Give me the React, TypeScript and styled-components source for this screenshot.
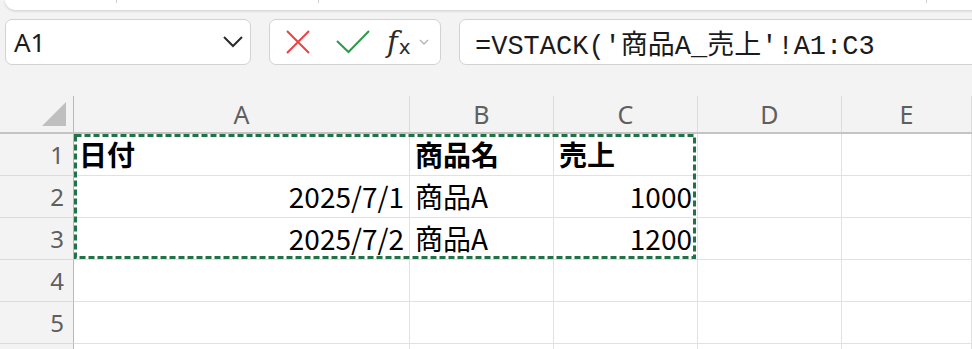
import styled, { createGlobalStyle } from "styled-components";

const GlobalStyle = createGlobalStyle`
    html, body {
        margin: 0;
        padding: 0;
        background: #f3f3f3;
        overflow: hidden;
    }
    * {
        box-sizing: border-box;
    }
`;

const CELL_FONT = `"Noto Sans CJK JP", "Noto Sans", sans-serif`;
const UI_FONT = `"Noto Sans", "Noto Sans CJK JP", sans-serif`;
const COLUMNS = "74px 336px 144px 144px 144px 1fr";

const PAGE = styled.div`
    width: 972px;
    height: 349px;
    overflow: hidden;
`;

// RIBBON (bottom edge of the ribbon panel above)
const RIBBON = styled.div`
    margin-left: 5px;
    width: 1000px;
    height: 10px;
    background: #ffffff;
    border-bottom-left-radius: 10px;
    box-shadow: 0 1px 3px rgba(0, 0, 0, 0.16);
    display: flex;
`;

const RIBBONPART = styled.div<{ $w: number }>`
    width: ${(p) => p.$w}px;
    height: 3px;
    border-right: 1px solid #d0d0d0;
`;

// FORMULA BAR
const FORMULABAR = styled.div`
    display: flex;
    gap: 18px;
    padding: 9px 0 0 5px;
    height: 55px;
`;

const BOX = styled.div<{ $w: number }>`
    width: ${(p) => p.$w}px;
    flex-shrink: 0;
    height: 46px;
    background: #ffffff;
    border: 1.5px solid #d2d2d2;
    border-radius: 7px;
    display: flex;
    align-items: center;
`;

const NAMETEXT = styled.span`
    flex: 1;
    padding-left: 8px;
    font-family: ${UI_FONT};
    font-size: 26px;
    color: #1b1b1b;
`;

const CHEVRON = styled.svg`
    margin-right: 6px;
`;

const ICONBTN = styled.svg<{ $ml: number }>`
    margin-left: ${(p) => p.$ml}px;
    flex-shrink: 0;
`;

const FX = styled.span`
    margin-left: 17px;
    font-family: "DejaVu Serif", serif;
    font-style: italic;
    font-size: 29px;
    color: #2b2b2b;
    display: flex;
    align-items: baseline;
    line-height: 1;

    & i {
        font-family: "DejaVu Sans", sans-serif;
        font-style: normal;
        font-size: 20px;
        margin-left: 1px;
        position: relative;
        top: 2px;
    }
`;

const FORMULATEXT = styled.span`
    padding-left: 15px;
    font-family: "Liberation Mono", "Noto Sans CJK JP", monospace;
    font-size: 27px;
    color: #1b1b1b;
    white-space: nowrap;
`;

// SHEET
const SHEET = styled.div`
    margin-top: 31px;
    background: #ffffff;
`;

const HEADERROW = styled.div`
    display: grid;
    grid-template-columns: ${COLUMNS};
    height: 38px;
    background: #f3f3f3;
    border-bottom: 2px solid #c4c4c4;
`;

const CORNER = styled.div`
    border-right: 1px solid #b9b9b9;
    display: flex;
    justify-content: flex-end;
    align-items: flex-end;
    padding: 0 7px 6px 0;
`;

const TRIANGLE = styled.div`
    width: 24px;
    height: 24px;
    background: #bfbfbf;
    clip-path: polygon(100% 0, 100% 100%, 0 100%);
`;

const COLHEAD = styled.div`
    border-right: 1px solid #dcdcdc;
    display: flex;
    align-items: center;
    justify-content: center;
    font-family: ${UI_FONT};
    font-size: 25px;
    color: #5f5f5f;
`;

const BODY = styled.div`
    position: relative;
`;

const ROW = styled.div`
    display: grid;
    grid-template-columns: ${COLUMNS};
    height: 42px;
`;

const ROWHEAD = styled.div`
    background: #f3f3f3;
    border-right: 1px solid #b9b9b9;
    border-bottom: 1px solid #dcdcdc;
    display: flex;
    align-items: center;
    justify-content: flex-end;
    padding-right: 9px;
    font-family: ${UI_FONT};
    font-size: 24px;
    color: #5f5f5f;
`;

const CELL = styled.div<{ $right?: boolean; $bold?: boolean }>`
    border-right: 1px solid #e1e1e1;
    border-bottom: 1px solid #e1e1e1;
    display: flex;
    align-items: center;
    justify-content: ${(p) => (p.$right ? "flex-end" : "flex-start")};
    padding: 0 5px 1px 5px;
    font-family: ${CELL_FONT};
    font-size: 28px;
    font-weight: ${(p) => (p.$bold ? 700 : 400)};
    color: #000000;
    white-space: nowrap;
    overflow: hidden;
`;

// copy marquee around A1:C3
const MARQUEE = styled.svg`
    position: absolute;
    left: 74px;
    top: 0;
    pointer-events: none;
`;

type CellData = { text: string; right?: boolean; bold?: boolean };

const rows: CellData[][] = [
    [{ text: "日付", bold: true }, { text: "商品名", bold: true }, { text: "売上", bold: true }],
    [{ text: "2025/7/1", right: true }, { text: "商品A" }, { text: "1000", right: true }],
    [{ text: "2025/7/2", right: true }, { text: "商品A" }, { text: "1200", right: true }],
    [],
    [],
];

const columns = ["A", "B", "C", "D", "E"];

const App: React.FC = () => {
    return (
        <PAGE>
            <GlobalStyle />
            <RIBBON>
                <RIBBONPART $w={112} />
                <RIBBONPART $w={202} />
                <RIBBONPART $w={608} />
            </RIBBON>

            <FORMULABAR>
                <BOX $w={246}>
                    <NAMETEXT>A1</NAMETEXT>
                    <CHEVRON width="22" height="14" viewBox="0 0 22 14">
                        <path d="M2 2 L11 11 L20 2" fill="none" stroke="#2a2a2a" strokeWidth="2" />
                    </CHEVRON>
                </BOX>
                <BOX $w={172}>
                    <ICONBTN $ml={15} width="26" height="26" viewBox="0 0 26 26">
                        <path d="M2 2 L24 24 M24 2 L2 24" stroke="#ee4040" strokeWidth="2" fill="none" />
                    </ICONBTN>
                    <ICONBTN $ml={25} width="34" height="26" viewBox="0 0 34 26">
                        <path d="M1 12 L12.5 23 L33 2" stroke="#2c9a47" strokeWidth="2" fill="none" />
                    </ICONBTN>
                    <FX>
                        f<i>x</i>
                    </FX>
                    <ICONBTN $ml={8} width="10" height="7" viewBox="0 0 10 7">
                        <path d="M1 1 L5 5 L9 1" stroke="#b4b4b4" strokeWidth="1.3" fill="none" />
                    </ICONBTN>
                </BOX>
                <BOX $w={540}>
                    <FORMULATEXT>=VSTACK('商品A_売上'!A1:C3</FORMULATEXT>
                </BOX>
            </FORMULABAR>

            <SHEET>
                <HEADERROW>
                    <CORNER>
                        <TRIANGLE />
                    </CORNER>
                    {columns.map((c) => (
                        <COLHEAD key={c}>{c}</COLHEAD>
                    ))}
                </HEADERROW>
                <BODY>
                    {rows.map((r, i) => (
                        <ROW key={i}>
                            <ROWHEAD>{i + 1}</ROWHEAD>
                            {columns.map((c, j) => (
                                <CELL key={c} $right={r[j]?.right} $bold={r[j]?.bold}>
                                    {r[j]?.text}
                                </CELL>
                            ))}
                        </ROW>
                    ))}
                    <ROW>
                        <ROWHEAD />
                        {columns.map((c) => (
                            <CELL key={c} />
                        ))}
                    </ROW>
                    <MARQUEE width="622" height="125" viewBox="0 0 622 125">
                        <rect
                            x="1.5"
                            y="1.5"
                            width="619"
                            height="122"
                            fill="none"
                            stroke="#ffffff"
                            strokeWidth="3"
                        />
                        <rect
                            x="1.5"
                            y="1.5"
                            width="619"
                            height="122"
                            fill="none"
                            stroke="#217346"
                            strokeWidth="3"
                            strokeDasharray="6 3"
                        />
                    </MARQUEE>
                </BODY>
            </SHEET>
        </PAGE>
    );
};

export default App;
